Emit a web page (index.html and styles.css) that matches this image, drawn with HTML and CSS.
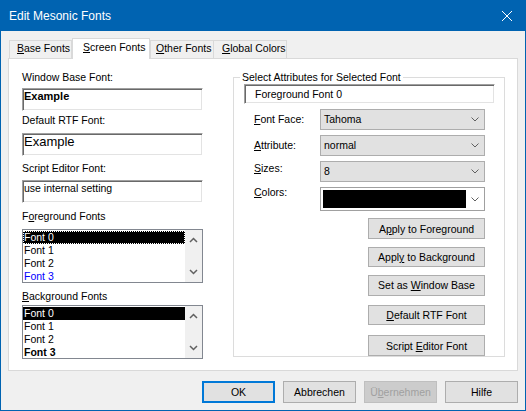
FILE: index.html
```html
<!DOCTYPE html>
<html lang="en">
  <head>
    <meta charset="UTF-8" />
    <title>Edit Mesonic Fonts</title>
    <link rel="stylesheet" href="styles.css">
  </head>
  <body>
    <div class="window">
      <div class="titlebar">
        <span class="title">Edit Mesonic Fonts</span>
        <svg class="close-icon" width="10" height="10" viewBox="0 0 10 10">
          <path d="M0 0 L10 10 M10 0 L0 10" stroke="#fff" stroke-width="1" fill="none" />
        </svg>
      </div>

      <div class="dialog">
        <div class="tabs">
          <div class="tab tab-base"><u>B</u>ase Fonts</div>
          <div class="tab tab-screen active"><u>S</u>creen Fonts</div>
          <div class="tab tab-other"><u>O</u>ther Fonts</div>
          <div class="tab tab-colors"><u>G</u>lobal Colors</div>
        </div>

        <div class="panel">
          <div class="left-col">
            <div class="field-label lbl-window">Window Base Font:</div>
            <div class="textbox sample-bold">Example</div>

            <div class="field-label lbl-rtf">Default RTF Font:</div>
            <div class="textbox sample-large">Example</div>

            <div class="field-label lbl-script">Script Editor Font:</div>
            <div class="textbox">use internal setting</div>

            <div class="field-label lbl-fore">F<u>o</u>reground Fonts</div>
            <div class="listbox">
              <div class="list-items">
                <div class="list-item selected focused">Font 0</div>
                <div class="list-item">Font 1</div>
                <div class="list-item">Font 2</div>
                <div class="list-item blue">Font 3</div>
              </div>
              <div class="scrollbar">
                <svg width="9" height="6" viewBox="0 0 9 6"><path d="M1 5 L4.5 1.5 L8 5" /></svg>
                <svg width="9" height="6" viewBox="0 0 9 6"><path d="M1 1 L4.5 4.5 L8 1" /></svg>
              </div>
            </div>

            <div class="field-label lbl-back"><u>B</u>ackground Fonts</div>
            <div class="listbox">
              <div class="list-items">
                <div class="list-item selected">Font 0</div>
                <div class="list-item">Font 1</div>
                <div class="list-item">Font 2</div>
                <div class="list-item bold">Font 3</div>
              </div>
              <div class="scrollbar">
                <svg width="9" height="6" viewBox="0 0 9 6"><path d="M1 5 L4.5 1.5 L8 5" /></svg>
                <svg width="9" height="6" viewBox="0 0 9 6"><path d="M1 1 L4.5 4.5 L8 1" /></svg>
              </div>
            </div>
          </div>

          <fieldset class="group">
            <legend>Select Attributes for Selected Font</legend>
            <div class="textbox name-box">Foreground Font 0</div>

            <div class="attr-row">
              <span class="attr-label lbl-face"><u>F</u>ont Face:</span>
              <div class="combo">
                <span>Tahoma</span>
                <svg width="8" height="5" viewBox="0 0 8 5"><path d="M0.5 0.5 L4 4 L7.5 0.5" /></svg>
              </div>
            </div>
            <div class="attr-row">
              <span class="attr-label lbl-attr"><u>A</u>ttribute:</span>
              <div class="combo">
                <span>normal</span>
                <svg width="8" height="5" viewBox="0 0 8 5"><path d="M0.5 0.5 L4 4 L7.5 0.5" /></svg>
              </div>
            </div>
            <div class="attr-row">
              <span class="attr-label lbl-sizes"><u>S</u>izes:</span>
              <div class="combo">
                <span>8</span>
                <svg width="8" height="5" viewBox="0 0 8 5"><path d="M0.5 0.5 L4 4 L7.5 0.5" /></svg>
              </div>
            </div>
            <div class="attr-row">
              <span class="attr-label lbl-colors"><u>C</u>olors:</span>
              <div class="combo color-combo">
                <span class="swatch"></span>
                <svg width="8" height="5" viewBox="0 0 8 5"><path d="M0.5 0.5 L4 4 L7.5 0.5" /></svg>
              </div>
            </div>

            <button class="btn side-btn btn-fore">A<u>p</u>ply to Foreground</button>
            <button class="btn side-btn btn-back">Appl<u>y</u> to Background</button>
            <button class="btn side-btn btn-base">Set as <u>W</u>indow Base</button>
            <button class="btn side-btn btn-rtf"><u>D</u>efault RTF Font</button>
            <button class="btn side-btn btn-script">Script <u>E</u>ditor Font</button>
          </fieldset>
        </div>

        <div class="footer">
          <button class="btn footer-btn default">OK</button>
          <button class="btn footer-btn">Abbrechen</button>
          <button class="btn footer-btn disabled">Ü<u>b</u>ernehmen</button>
          <button class="btn footer-btn">Hilfe</button>
        </div>
      </div>
    </div>
  </body>
</html>
```

FILE: styles.css
```css
body {
  margin: 0;
  font-family: "Liberation Sans", Arial, sans-serif;
  font-size: 10.5px;
  color: #000;
  background: #fff;
}

u {
  text-underline-offset: 1px;
}

.window {
  width: 526px;
  height: 411px;
  box-sizing: border-box;
  border: 1px solid #0063b1;
  background: #f0f0f0;
  display: flex;
  flex-direction: column;
}

.titlebar {
  height: 30px;
  flex: none;
  background: #0063b1;
  color: #fff;
  display: flex;
  align-items: center;
  justify-content: space-between;
  padding: 0 13px 0 8px;
  font-size: 12px;
}

.close-icon {
  display: block;
}

.dialog {
  flex: 1;
  padding: 7px 7px 0 7px;
  display: flex;
  flex-direction: column;
}

/* tab strip */
.tabs {
  display: flex;
  align-items: flex-end;
  height: 21px;
  margin-left: 1px;
  margin-bottom: -1px;
  position: relative;
  z-index: 1;
}

.tab {
  box-sizing: border-box;
  height: 18px;
  border: 1px solid #d9d9d9;
  border-bottom: none;
  line-height: 15px;
  margin-bottom: 1px;
  white-space: nowrap;
  background: #f0f0f0;
}

.tab-base {
  width: 63px;
  padding-left: 7px;
}

.tab-screen {
  width: 78px;
  padding-left: 10px;
}

.tab-other {
  width: 64px;
  padding-left: 5px;
}

.tab-colors {
  width: 74px;
  margin-left: -1px;
  padding-left: 8px;
}

.tab.active {
  height: 21px;
  margin-bottom: 0;
  padding-top: 1px;
  background: #fff;
}

/* tab page */
.panel {
  box-sizing: border-box;
  height: 313px;
  border: 1px solid #d9d9d9;
  background: #fff;
  display: flex;
  align-items: flex-start;
  padding-left: 13px;
}

.left-col {
  width: 181px;
  display: flex;
  flex-direction: column;
}

.field-label {
  line-height: 13px;
  white-space: nowrap;
}

.lbl-window {
  margin-top: 12px;
  margin-bottom: 4px;
}

.lbl-rtf {
  margin-top: 3px;
  margin-bottom: 6px;
}

.lbl-script {
  margin-top: 6px;
  margin-bottom: 5px;
}

.lbl-fore {
  margin-top: 7px;
  margin-bottom: 6px;
}

.lbl-back {
  margin-top: 7px;
  margin-bottom: 2px;
}

.textbox {
  box-sizing: border-box;
  height: 23px;
  border: 1px solid;
  border-color: #a0a0a0 #fff #fff #a0a0a0;
  box-shadow: inset 1px 1px 0 #696969, inset -1px -1px 0 #e3e3e3;
  background: #fff;
  padding: 1px 1px 0 1px;
  line-height: 13px;
  white-space: nowrap;
  overflow: hidden;
}

.sample-bold {
  font-weight: bold;
  font-size: 11px;
}

.sample-large {
  font-size: 13px;
  line-height: 15px;
  padding-top: 0;
}

.listbox {
  box-sizing: border-box;
  height: 54px;
  border: 1px solid #828790;
  display: flex;
  overflow: hidden;
  background: #fff;
}

.list-items {
  flex: 1;
  padding-top: 1px;
}

.list-item {
  height: 13px;
  line-height: 13px;
  padding-left: 1px;
}

.list-item.selected {
  background: #000;
  color: #fff;
}

.list-item.focused {
  outline: 1px dotted #fff;
  outline-offset: -1px;
}

.list-item.blue {
  color: #0000ff;
}

.list-item.bold {
  font-weight: bold;
}

.scrollbar {
  width: 17px;
  background: #f0f0f0;
  display: flex;
  flex-direction: column;
  justify-content: space-between;
  align-items: center;
  padding: 7px 0;
}

.scrollbar svg {
  display: block;
}

.scrollbar path {
  fill: none;
  stroke: #606060;
  stroke-width: 1.5;
}

/* attribute group */
.group {
  box-sizing: border-box;
  width: 272px;
  height: 287px;
  margin: 11px 0 0 30px;
  padding: 0;
  min-width: 0;
  border: 1px solid #dcdcdc;
  display: flex;
  flex-direction: column;
  align-items: flex-start;
}

.group legend {
  margin-left: 6px;
  padding: 0 2px;
  line-height: 14px;
}

.name-box {
  height: 21px;
  width: 251px;
  margin-left: 10px;
  padding: 0 0 0 10px;
  line-height: 19px;
}

.attr-row {
  display: flex;
  align-items: flex-start;
  margin-top: 5px;
  padding-left: 20px;
}

.attr-label {
  width: 66px;
  line-height: 13px;
}

.lbl-face,
.lbl-attr {
  padding-top: 4px;
}

.lbl-sizes {
  padding-top: 1px;
}

.lbl-colors {
  margin-top: -1px;
}

.combo {
  box-sizing: border-box;
  width: 165px;
  height: 21px;
  border: 1px solid #adadad;
  background: #e1e1e1;
  display: flex;
  align-items: center;
  justify-content: space-between;
  padding: 0 5px 0 3px;
  line-height: 19px;
}

.combo path {
  fill: none;
  stroke: #606060;
  stroke-width: 1;
}

.color-combo {
  height: 24px;
  background: #fff;
  border-color: #a0a0a0;
  padding-left: 2px;
}

.swatch {
  width: 143px;
  height: 18px;
  background: #000;
}

.btn {
  box-sizing: border-box;
  font-family: inherit;
  font-size: 10.5px;
  color: #000;
  background: #e1e1e1;
  border: 1px solid #adadad;
  border-radius: 0;
  padding: 0;
  margin: 0;
  white-space: nowrap;
}

.side-btn {
  width: 117px;
  height: 21px;
  margin-left: 134px;
}

.btn-fore {
  margin-top: 7px;
}

.btn-back,
.btn-base {
  margin-top: 8px;
}

.btn-rtf {
  margin-top: 9px;
}

.btn-script {
  margin-top: 10px;
  flex: none;
}

.footer {
  display: flex;
  justify-content: flex-end;
  gap: 8px;
  margin-top: 10px;
}

.footer-btn {
  width: 73px;
  height: 22px;
}

.footer-btn.default {
  border: 2px solid #0078d7;
}

.footer-btn.disabled {
  background: #cccccc;
  border-color: #bfbfbf;
  color: #a0a0a0;
}
```
